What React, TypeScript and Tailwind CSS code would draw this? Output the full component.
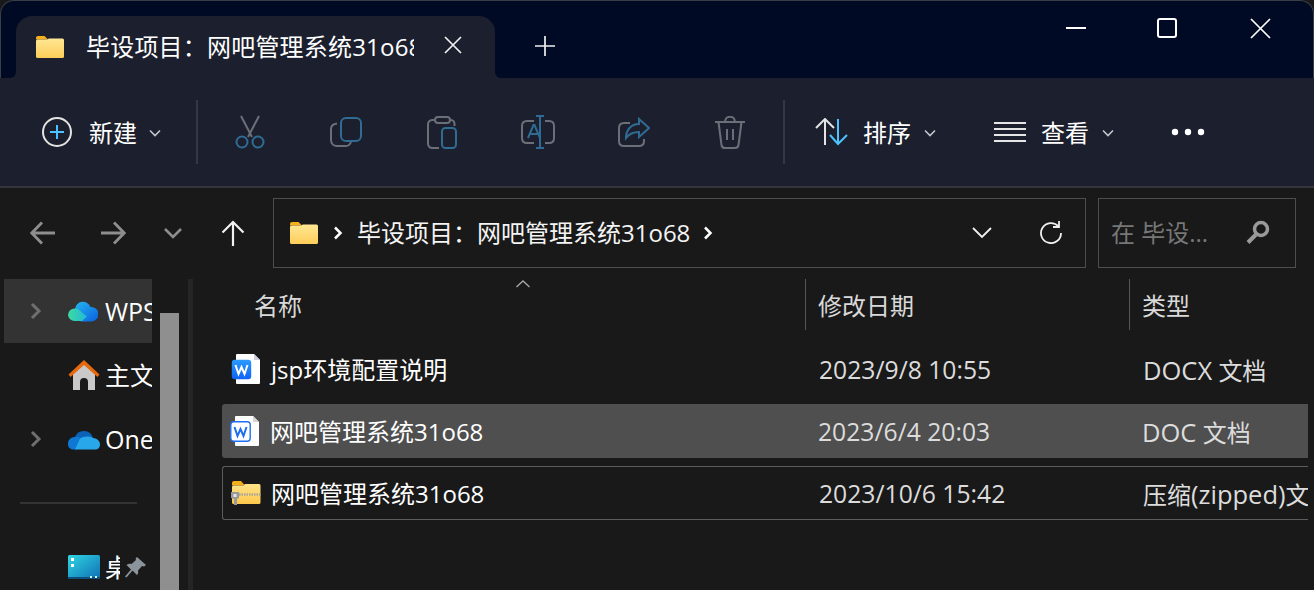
import type { ReactNode } from 'react';

const FONT = "font-['Open_Sans','Noto_Sans_CJK_SC',sans-serif]";
const GREY = '#6b6f78';
const BLUE = '#2f6b92';

function Chevron({ className = '' }: { className?: string }) {
  return (
    <svg width="12" height="8" viewBox="0 0 12 8" fill="none" className={className}>
      <path d="M1 1.5 6 6.5 11 1.5" stroke="#c4c6cc" strokeWidth="1.6" />
    </svg>
  );
}

function Folder({ id }: { id: string }) {
  return (
    <svg width="28" height="22" viewBox="0 0 28 22">
      <defs>
        <linearGradient id={id} x1="0" y1="0" x2="0" y2="1">
          <stop offset="0" stopColor="#ffe794" />
          <stop offset="1" stopColor="#fdcd58" />
        </linearGradient>
      </defs>
      <path d="M0 2a2 2 0 0 1 2-2h6.500l3.500 3.500h-12z" fill="#f6ae1a" />
      <path d="M0 5a1.500 1.500 0 0 1 1.500-1.500H11L13 2.500h13.500A1.500 1.500 0 0 1 28 4v16.500a1.500 1.500 0 0 1-1.500 1.500h-25A1.500 1.500 0 0 1 0 20.500z" fill={`url(#${id})`} />
    </svg>
  );
}

function WordIcon({ filled, id }: { filled: boolean; id: string }) {
  return (
    <svg width="29" height="30" viewBox="0 0 29 30">
      <defs>
        <linearGradient id={id} x1="0" y1="0" x2="0" y2="1">
          <stop offset="0" stopColor="#2a9bff" />
          <stop offset="1" stopColor="#0f63f5" />
        </linearGradient>
      </defs>
      <path d="M5 1a1 1 0 0 1 1-1h17l6 6v23a1 1 0 0 1-1 1H6a1 1 0 0 1-1-1z" fill="#fff" />
      <path d="M23 0l6 6h-6z" fill={filled ? '#c9d2de' : '#d6d6d6'} />
      <rect x="0.800" y="5.800" width="19.400" height="19.400" rx="3" fill={filled ? `url(#${id})` : '#fff'} stroke={filled ? 'none' : '#1f6ff2'} strokeWidth="1.400" />
      <path d="M4.500 11 7.500 20 10.500 13 13.500 20 16.500 11" fill="none" stroke={filled ? '#fff' : '#1f6ff2'} strokeWidth="2" />
    </svg>
  );
}

function ZipIcon() {
  return (
    <svg width="30" height="24" viewBox="0 0 30 24">
      <defs>
        <linearGradient id="zipBody" x1="0" y1="0" x2="0" y2="1">
          <stop offset="0" stopColor="#ffe38a" />
          <stop offset="1" stopColor="#fdc84b" />
        </linearGradient>
      </defs>
      <path d="M1 2a2 2 0 0 1 2-2h7l4 4.500H1z" fill="#f6ae1a" />
      <path d="M1 6a1.500 1.500 0 0 1 1.500-1.500h10L14 3h14a1.500 1.500 0 0 1 1.500 1.500v17a1.500 1.500 0 0 1-1.500 1.500H2.500A1.500 1.500 0 0 1 1 21.500z" fill="url(#zipBody)" />
      <path d="M8 13.500h21.500" stroke="#a9a59a" strokeWidth="2.500" strokeDasharray="1.500 1" />
      <path d="M0 11h8v6l-2 1v6H3v-6l-3-1z" fill="#9a9a9a" />
      <rect x="2.500" y="13" width="3" height="3" fill="#e5e5e5" />
    </svg>
  );
}

function WpsCloud() {
  return (
    <svg width="30" height="22" viewBox="0 0 30 22">
      <defs>
        <linearGradient id="wpsBlue" x1="0" y1="0" x2="1" y2="1">
          <stop offset="0" stopColor="#25b6f0" />
          <stop offset="1" stopColor="#0a5fe0" />
        </linearGradient>
        <linearGradient id="wpsGreen" x1="0" y1="0" x2="1" y2="0">
          <stop offset="0" stopColor="#3fdba0" />
          <stop offset="1" stopColor="#22b8d8" />
        </linearGradient>
      </defs>
      <path d="M7 9A8 8 0 0 1 22.500 7 7.200 7.200 0 0 1 24 21.500H13z" fill="url(#wpsBlue)" />
      <path d="M0 15a6.500 6.500 0 0 1 7-6.500c3 0 5 2 7 4l5 4-5 4.500H6.500A6.500 6.500 0 0 1 0 15z" fill="url(#wpsGreen)" />
    </svg>
  );
}

function HomeIcon() {
  return (
    <svg width="32" height="30" viewBox="0 0 32 30">
      <path d="M5 14 16 4l11 10v16H20v-8a4 4 0 0 0-8 0v8H5z" fill="#c9c9c9" />
      <path d="M0.500 14.500 16 0l15.500 14.500-2 2.500L16 5 2.500 17z" fill="#e8680c" />
    </svg>
  );
}

function OneDriveIcon() {
  return (
    <svg width="32" height="22" viewBox="0 0 32 22">
      <path d="M7 9a9.500 9.500 0 0 1 18 1l-13 7z" fill="#0b62b8" />
      <path d="M7 9c2-.5 4 0 6 1.500l6 4.500-11 6.500H5A5 5 0 0 1 0 16a6.500 6.500 0 0 1 7-7z" fill="#0f78d4" />
      <path d="M12 10.500c3-2 8-3 13-.5 4 0 7 3 7 6.500 0 3-2 5-5 5H7z" fill="#28a8ea" />
    </svg>
  );
}

function DesktopIcon() {
  return (
    <svg width="32" height="24" viewBox="0 0 32 24">
      <defs>
        <linearGradient id="desk" x1="0" y1="0" x2="1" y2="1">
          <stop offset="0" stopColor="#2fd6e3" />
          <stop offset="1" stopColor="#0f6fb5" />
        </linearGradient>
      </defs>
      <rect width="32" height="24" rx="1.500" fill="url(#desk)" />
      <rect y="22" width="32" height="2" fill="#0c4f80" />
      <rect x="3" y="3" width="3" height="3" fill="#fff" />
      <rect x="3" y="9" width="3" height="3" fill="#fff" />
      <rect x="22" y="21" width="2" height="2" fill="#cfe" />
      <rect x="27" y="21" width="2" height="2" fill="#cfe" />
    </svg>
  );
}

function PinIcon() {
  return (
    <svg width="21" height="21" viewBox="0 0 21 21">
      <path d="M12 0l9 8-2 1.500-2-.5-4 4.500c.5 2 0 3.500-1 4.500L7.500 13.500 1.500 20.500 0 19.500l6-7L1.500 8C3 7 4.500 6.500 6.500 7L11 3l-.5-1.500z" fill="#8b949b" />
    </svg>
  );
}

function ToolCell({ children }: { children: ReactNode }) {
  return <div className="w-[96px] flex items-center justify-center">{children}</div>;
}

function ToolDivider() {
  return <div className="w-[2px] h-[64px] bg-[#343844]" />;
}

function Menu({ icon, label, width }: { icon: ReactNode; label: string; width: string }) {
  return (
    <div className={`flex items-center h-full ${width}`}>
      {icon}
      <span className="text-[24px] leading-none text-white mt-[2px]">{label}</span>
      <Chevron className="ml-[13px] mt-[2px]" />
    </div>
  );
}

function SideRow({ icon, label, expand, active }: { icon: ReactNode; label: string; expand?: boolean; active?: boolean }) {
  return (
    <div className={`relative flex items-center h-[64px] shrink-0 overflow-hidden whitespace-nowrap ${active ? 'bg-[#333333]' : ''}`}>
      <div className="w-[64px] shrink-0 flex justify-center">
        {expand && (
          <svg width="12" height="18" viewBox="0 0 12 18">
            <path d="M2 2l7 7-7 7" fill="none" stroke="#6f6f6f" strokeWidth="3" />
          </svg>
        )}
      </div>
      <div className="w-[37px] shrink-0 flex justify-start">{icon}</div>
      <span className="text-[25px] leading-none text-white">{label}</span>
    </div>
  );
}

function FileRow({ icon, name, date, type, className }: { icon: ReactNode; name: string; date: string; type: ReactNode; className: string }) {
  return (
    <div className={`flex items-center h-[54px] ml-[29px] whitespace-nowrap overflow-hidden rounded-l-[3px] ${className}`}>
      <div className="w-[48px] pl-[8px] shrink-0">{icon}</div>
      <div className="w-[548px] shrink-0 text-[24px] text-white pt-[2px]">{name}</div>
      <div className="w-[324px] shrink-0 text-[24.7px] text-[#dcdcdc] pt-[2px]">{date}</div>
      <div className="text-[24px] text-[#dcdcdc] pt-[2px]">{type}</div>
    </div>
  );
}

export default function App() {
  return (
    <div className={`w-[1314px] h-[590px] flex flex-col overflow-hidden bg-[#191919] ${FONT}`}>
      {/* Title bar with tab */}
      <div className="h-[78px] shrink-0 flex items-end bg-[#000a24] pl-[16px] rounded-t-[14px] border-t border-x border-[#3a3d46]">
        <div className="relative w-[479px] h-[62px] -ml-px flex items-center bg-[#1c202e] rounded-t-[16px] pl-[20px]">
          <div className="absolute -left-[6px] bottom-0 w-[6px] h-[6px] bg-[#1c202e]">
            <div className="w-full h-full bg-[#000a24] rounded-br-[6px]" />
          </div>
          <div className="absolute -right-[6px] bottom-0 w-[6px] h-[6px] bg-[#1c202e]">
            <div className="w-full h-full bg-[#000a24] rounded-bl-[6px]" />
          </div>
          <Folder id="tabFolder" />
          <div className="w-[328px] ml-[22px] overflow-hidden whitespace-nowrap text-[24px] leading-none tracking-[0.2px] text-white">
            毕设项目：网吧管理系统31o68
          </div>
          <svg width="18" height="18" viewBox="0 0 18 18" className="ml-[30px] -mt-[4px]">
            <path d="M1 1l16 16M17 1 1 17" stroke="#f0f0f0" strokeWidth="1.700" />
          </svg>
        </div>
        <div className="h-[62px] flex items-center ml-[40px]">
          <svg width="20" height="20" viewBox="0 0 20 20" className="-mt-[2px]">
            <path d="M10 0v20M0 10h20" stroke="#f0f0f0" strokeWidth="1.700" />
          </svg>
        </div>
        <div className="ml-auto self-start flex items-center h-[54px] pr-[42px] gap-[71px]">
          <svg width="20" height="2" viewBox="0 0 20 2">
            <rect width="20" height="2" fill="#fff" />
          </svg>
          <svg width="20" height="20" viewBox="0 0 20 20">
            <rect x="1" y="1" width="18" height="18" rx="2" fill="none" stroke="#fff" strokeWidth="2" />
          </svg>
          <svg width="21" height="21" viewBox="0 0 21 21" className="ml-[2px]">
            <path d="M1 1l19 19M20 1 1 20" stroke="#fff" strokeWidth="1.700" />
          </svg>
        </div>
      </div>

      {/* Command bar */}
      <div className="h-[110px] shrink-0 flex items-center bg-[#1c202e] border-b-2 border-[#33353a]">
        <div className="w-[196px] pl-[42px] flex items-center">
          <svg width="30" height="30" viewBox="0 0 30 30">
            <circle cx="15" cy="15" r="14" fill="none" stroke="#e4e4e4" strokeWidth="2" />
            <path d="M15 8v14M8 15h14" stroke="#4cc2ff" strokeWidth="2" />
          </svg>
          <span className="ml-[17px] text-[24px] leading-none text-white mt-[2px]">新建</span>
          <Chevron className="ml-[12px] mt-[2px]" />
        </div>
        <ToolDivider />
        <div className="flex ml-[4px]">
          <ToolCell>
            <svg width="30" height="34" viewBox="0 0 30 34" fill="none" strokeWidth="2">
              <path d="M6 1l11 21M24 1 13 22" stroke={GREY} />
              <circle cx="7" cy="27" r="5.500" stroke={BLUE} />
              <circle cx="23" cy="27" r="5.500" stroke={BLUE} />
            </svg>
          </ToolCell>
          <ToolCell>
            <svg width="32" height="30" viewBox="0 0 32 30" fill="none" strokeWidth="2">
              <path d="M7 6.500C3.500 7 1 9 1 12v11c0 3.500 2.500 6 6 6h9c2.500 0 4-1.500 5-4" stroke={GREY} />
              <rect x="11" y="1" width="20" height="23" rx="5" stroke={BLUE} />
            </svg>
          </ToolCell>
          <ToolCell>
            <svg width="30" height="33" viewBox="0 0 30 33" fill="none" strokeWidth="2">
              <path d="M7 4H5C3 4 1 6 1 8v20c0 2 2 4 4 4h7M23 4h1c2 0 3.500 2 3.500 4v2" stroke={GREY} />
              <rect x="8" y="1" width="15" height="6" rx="3" stroke={GREY} />
              <rect x="15" y="12" width="14" height="20" rx="3.500" stroke={BLUE} />
            </svg>
          </ToolCell>
          <ToolCell>
            <svg width="34" height="34" viewBox="0 0 34 34" fill="none" strokeWidth="2">
              <path d="M13 6H6C3 6 1 8 1 11v12c0 3 2 5 5 5h7M24 6h4c3 0 5 2 5 5v12c0 3-2 5-5 5h-4" stroke={GREY} />
              <path d="M7 23l5.500-13h1L19 23M9 19h8" stroke={BLUE} />
              <path d="M15 1h8M19 1v32M15 33h8" stroke={BLUE} />
            </svg>
          </ToolCell>
          <ToolCell>
            <svg width="32" height="30" viewBox="0 0 32 30" fill="none" strokeWidth="2">
              <path d="M12 6H6C3 6 1 8 1 11v13c0 3 2 5 5 5h15c3 0 5-2 5-5v-2" stroke={GREY} />
              <path d="M21 2l10 9-10 9v-5c-6 0-10 2-13 6 0-8 5-14 13-14z" stroke={BLUE} />
            </svg>
          </ToolCell>
          <ToolCell>
            <svg width="30" height="33" viewBox="0 0 30 33" fill="none" strokeWidth="2" stroke={GREY}>
              <path d="M0 6h30M10 6c0-7 10-7 10 0M3.500 6l3 23c.3 2 1.500 3 3.500 3h10c2 0 3.200-1 3.500-3l3-23M12 13v11M18 13v11" />
            </svg>
          </ToolCell>
        </div>
        <div className="ml-[5px]">
          <ToolDivider />
        </div>
        <Menu
          width="w-[209px] pl-[30px]"
          label="排序"
          icon={
            <svg width="34" height="28" viewBox="0 0 34 28" fill="none" strokeWidth="2" className="mr-[14px]">
              <path d="M10 27V1M1 10l9-9 9 9" stroke="#e4e4e4" />
              <path d="M23 1v25M15 17l8 9 9-9" stroke="#4cc2ff" />
            </svg>
          }
        />
        <Menu
          width="w-[177px]"
          label="查看"
          icon={
            <svg width="32" height="20" viewBox="0 0 32 20" className="mr-[15px]">
              <path d="M0 1h32M0 7h32M0 13h32M0 19h32" stroke="#e6e6e6" strokeWidth="2" />
            </svg>
          }
        />
        <svg width="34" height="8" viewBox="0 0 34 8">
          <circle cx="4" cy="4" r="3.200" fill="#fff" />
          <circle cx="17" cy="4" r="3.200" fill="#fff" />
          <circle cx="30" cy="4" r="3.200" fill="#fff" />
        </svg>
      </div>

      {/* Address row */}
      <div className="h-[91px] shrink-0 flex items-center pl-[13px] pb-[1px]">
        <div className="w-[60px] flex justify-center">
          <svg width="26" height="24" viewBox="0 0 26 24" fill="none" stroke="#8e8e8e" strokeWidth="2.800">
            <path d="M25 12H2M12 1.500 1.800 12 12 22.500" />
          </svg>
        </div>
        <div className="w-[60px] ml-[10px] flex justify-center">
          <svg width="26" height="24" viewBox="0 0 26 24" fill="none" stroke="#8e8e8e" strokeWidth="2.800">
            <path d="M1 12h23M14 1.500 24.200 12 14 22.500" />
          </svg>
        </div>
        <div className="w-[60px] flex justify-center">
          <svg width="18" height="11" viewBox="0 0 18 11" fill="none" stroke="#8e8e8e" strokeWidth="2.500">
            <path d="M1 1l8 8 8-8" />
          </svg>
        </div>
        <div className="w-[60px] flex justify-center">
          <svg width="24" height="26" viewBox="0 0 24 26" fill="none" stroke="#f2f2f2" strokeWidth="2.200">
            <path d="M12 26V2M1.500 12.500 12 2l10.500 10.500" />
          </svg>
        </div>
        <div className="w-[813px] h-[70px] ml-[10px] flex items-center border border-[#4d4d4d] pl-[16px] pr-[23px]">
          <Folder id="addrFolder" />
          <svg width="10" height="14" viewBox="0 0 10 14" fill="none" stroke="#fff" strokeWidth="2.500" className="ml-[15px]">
            <path d="M2 1.500 7.500 7 2 12.500" />
          </svg>
          <span className="ml-[14px] text-[24px] leading-none text-[#f4f4f4] whitespace-nowrap">毕设项目：网吧管理系统31o68</span>
          <svg width="10" height="14" viewBox="0 0 10 14" fill="none" stroke="#fff" strokeWidth="2.500" className="ml-[13px]">
            <path d="M2 1.500 7.500 7 2 12.500" />
          </svg>
          <svg width="20" height="12" viewBox="0 0 20 12" fill="none" stroke="#f0f0f0" strokeWidth="1.800" className="ml-auto">
            <path d="M1 1l9 9 9-9" />
          </svg>
          <svg width="24" height="24" viewBox="0 0 24 24" fill="none" stroke="#f0f0f0" strokeWidth="1.800" className="ml-[46px] -mt-[3px]">
            <path d="M20.500 6.500A10 10 0 1 0 23 13M21 1v6h-6" />
          </svg>
        </div>
        <div className="w-[198px] h-[70px] ml-[12px] flex items-center border border-[#4d4d4d] pl-[12px] pr-[25px]">
          <span className="text-[24px] leading-none text-[#777777] whitespace-nowrap">在 毕设...</span>
          <svg width="24" height="24" viewBox="0 0 24 24" fill="none" stroke="#9a9a9a" className="ml-auto -mt-[2px]">
            <circle cx="15" cy="9" r="6.500" strokeWidth="3.500" />
            <path d="M10 14.500 2 22.500" strokeWidth="4" />
          </svg>
        </div>
      </div>

      {/* Body */}
      <div className="flex-1 min-h-0 flex">
        <aside className="w-[152px] shrink-0 pl-[4px] flex flex-col overflow-hidden">
          <SideRow active expand icon={<WpsCloud />} label="WPS云盘" />
          <SideRow icon={<HomeIcon />} label="主文件夹" />
          <SideRow expand icon={<OneDriveIcon />} label="OneDrive" />
          <div className="h-[64px] flex items-center pl-[16px] shrink-0">
            <div className="w-[117px] h-[2px] bg-[#333333]" />
          </div>
          <div className="relative shrink-0">
            <SideRow icon={<DesktopIcon />} label="桌面" />
            <div className="absolute left-[116px] top-[16px] w-[32px] h-[32px] bg-[#191919] flex items-center pl-[5px]">
              <PinIcon />
            </div>
          </div>
        </aside>
        <div className="w-[8px] shrink-0" />
        <div className="w-[19px] shrink-0 mt-[34px] bg-[#8f8f8f]" />
        <div className="w-[9px] shrink-0" />
        <div className="w-[5px] shrink-0 bg-[#252525]" />
        <main className="w-[1115px] shrink-0 flex flex-col">
          <div className="relative h-[63px] shrink-0 flex items-start">
            <svg width="14" height="8" viewBox="0 0 14 8" fill="none" stroke="#a8a8a8" strokeWidth="1.300" className="absolute left-[323px] top-[1px]">
              <path d="M0.500 7 7 1l6.500 6" />
            </svg>
            <div className="w-[612px] h-[51px] pl-[61px] pt-[3px] flex items-center text-[24px] text-[#d9d9d9]">名称</div>
            <div className="w-[324px] h-[51px] pl-[12px] pt-[3px] flex items-center text-[24px] text-[#d9d9d9] border-l border-[#555555]">修改日期</div>
            <div className="h-[51px] pl-[12px] pt-[3px] flex items-center text-[24px] text-[#d9d9d9] border-l border-[#555555]">类型</div>
          </div>
          <div className="flex flex-col gap-[8px]">
            <FileRow className="border border-transparent" icon={<WordIcon filled id="wordA" />} name="jsp环境配置说明" date="2023/9/8 10:55" type={<><span className="text-[25.5px]">DOCX</span> 文档</>} />
            <FileRow className="bg-[#4f4f4f]" icon={<WordIcon filled={false} id="wordB" />} name="网吧管理系统31o68" date="2023/6/4 20:03" type={<><span className="text-[25.5px]">DOC</span> 文档</>} />
            <FileRow className="border-y border-l border-[#5c5c5c]" icon={<ZipIcon />} name="网吧管理系统31o68" date="2023/10/6 15:42" type={<>压缩<span className="text-[25.5px]">(zipped)</span>文件夹</>} />
          </div>
        </main>
      </div>
    </div>
  );
}
